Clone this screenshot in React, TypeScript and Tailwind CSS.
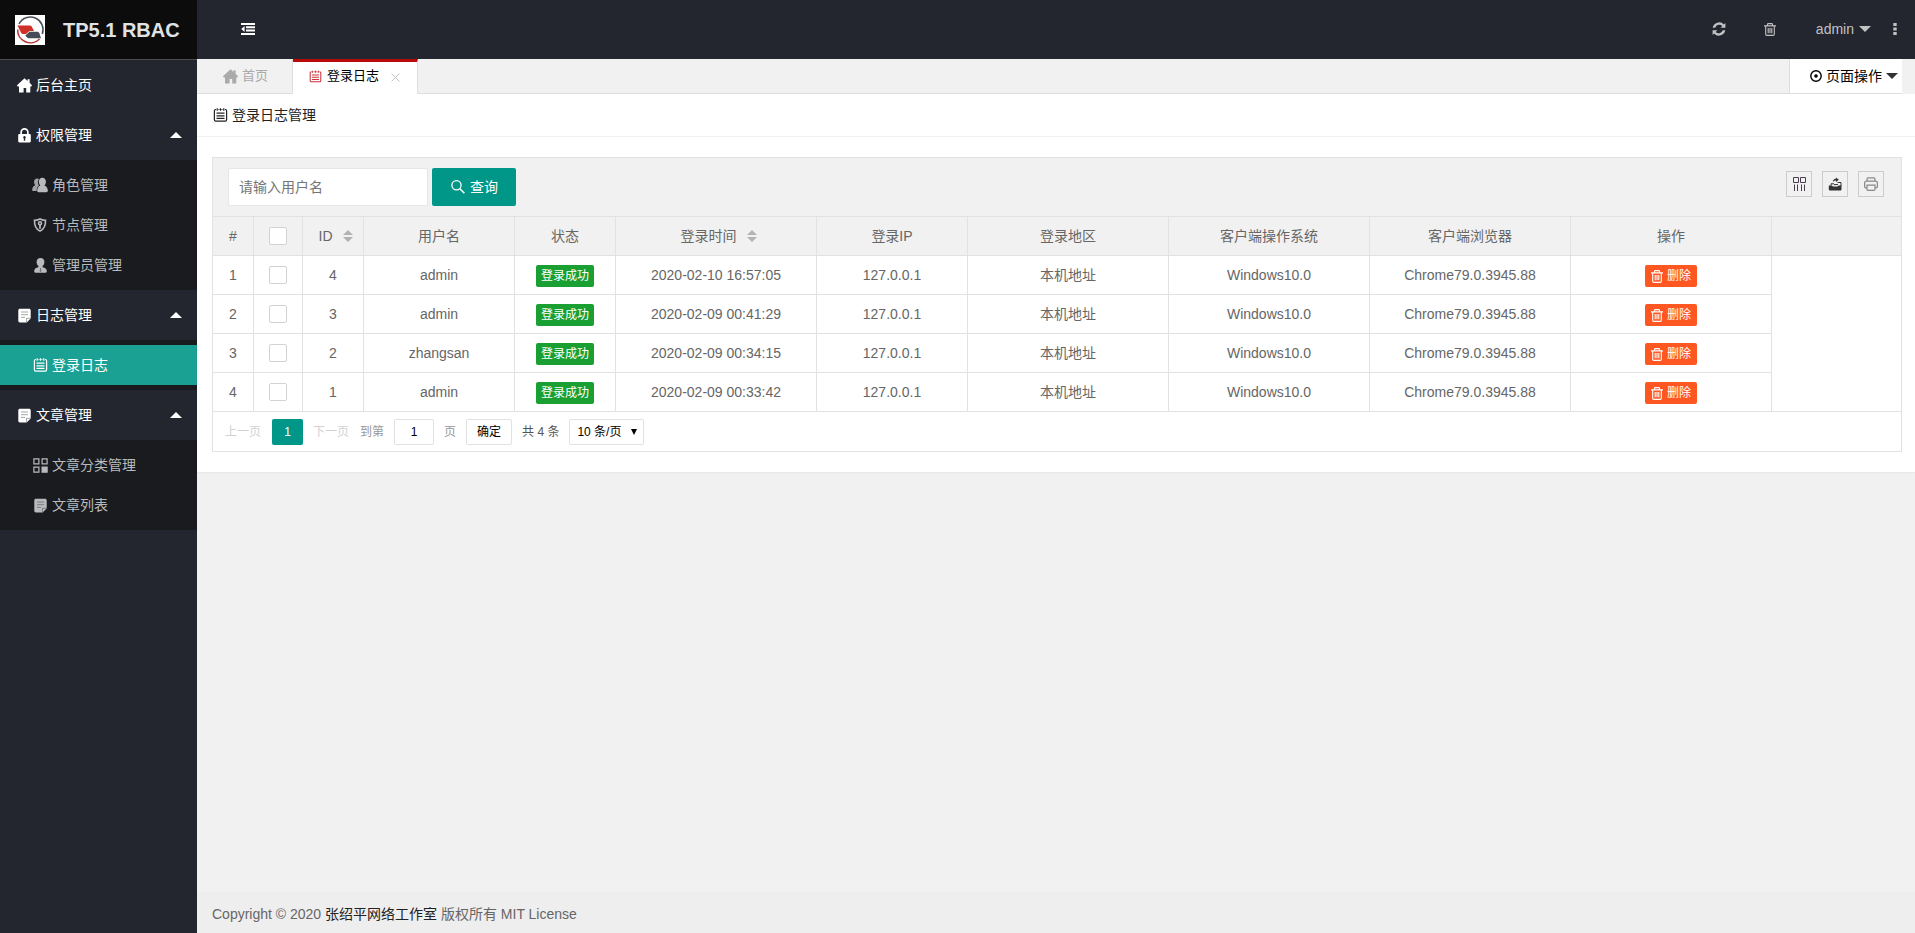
import type { ReactNode } from "react";

type IconProps = { className?: string };

const logs = [
  { id: 4, user: "admin", time: "2020-02-10 16:57:05", ip: "127.0.0.1" },
  { id: 3, user: "admin", time: "2020-02-09 00:41:29", ip: "127.0.0.1" },
  { id: 2, user: "zhangsan", time: "2020-02-09 00:34:15", ip: "127.0.0.1" },
  { id: 1, user: "admin", time: "2020-02-09 00:33:42", ip: "127.0.0.1" },
];

export default function App() {
  return (
    <div className="flex min-h-screen bg-[#f1f1f1] font-['Liberation_Sans','Noto_Sans_CJK_SC',sans-serif] text-sm text-[#666]">
      <Sidebar />
      <div className="flex min-w-0 flex-1 flex-col">
        <TopBar />
        <TabBar />
        <main className="flex-1">
          <section className="bg-white pb-5 shadow-xs">
            <h2 className="flex h-[43px] items-center gap-1 border-b border-[#f2f2f2] px-4 text-[#222]">
              <NotepadIcon className="h-[14px] w-[15px]" />
              登录日志管理
            </h2>
            <div className="ml-[15px] mr-[13px] mt-5 border border-[#e2e2e2]">
              <Toolbar />
              <LogTable />
              <Pagination />
            </div>
          </section>
        </main>
        <footer className="flex h-[41px] items-center bg-[#eee] px-[15px] pt-[2px]">
          <p>
            Copyright © 2020 <a href="#studio" className="text-[#222]">张绍平网络工作室</a> 版权所有 MIT License
          </p>
        </footer>
      </div>
    </div>
  );
}

/* Sidebar */

function Sidebar() {
  return (
    <aside className="w-[197px] shrink-0 bg-[#23262e]">
      <a href="#home" className="flex h-[60px] items-center gap-[18px] border-b border-[#4a4c50] bg-[#0c0c0c] pl-[15px]">
        <Logo className="size-[30px]" />
        <span className="text-xl font-bold text-[#e0e3e6]">TP5.1 RBAC</span>
      </a>
      <nav>
        <a href="#home" className="flex h-[50px] items-center gap-1 pl-[17px] text-white">
          <HomeIcon className="size-[15px]" />
          后台主页
        </a>
        <MenuGroup icon={<LockIcon className="size-[15px]" />} title="权限管理">
          <MenuItem icon={<UsersIcon className="h-4 w-[17px]" />} label="角色管理" />
          <MenuItem icon={<ShieldIcon className="size-[14px]" />} label="节点管理" />
          <MenuItem icon={<UserIcon className="size-[15px]" />} label="管理员管理" />
        </MenuGroup>
        <MenuGroup icon={<DocIcon className="size-[15px]" />} title="日志管理">
          <MenuItem icon={<NotepadIcon className="h-[14px] w-[15px]" />} label="登录日志" active />
        </MenuGroup>
        <MenuGroup icon={<DocIcon className="size-[15px]" />} title="文章管理">
          <MenuItem icon={<GridIcon className="size-[15px]" />} label="文章分类管理" />
          <MenuItem icon={<DocIcon className="size-[15px]" />} label="文章列表" />
        </MenuGroup>
      </nav>
    </aside>
  );
}

function MenuGroup({ icon, title, children }: { icon: ReactNode; title: string; children: ReactNode }) {
  return (
    <div>
      <button className="flex h-[50px] w-full items-center gap-1 pl-[17px] pr-[15px] text-white">
        {icon}
        {title}
        <Caret className="ml-auto h-[6px] w-3 rotate-180" />
      </button>
      <div className="bg-[#191b1f] py-[5px]">{children}</div>
    </div>
  );
}

function MenuItem({ icon, label, active }: { icon: ReactNode; label: string; active?: boolean }) {
  return (
    <a
      href="#menu"
      className={
        active
          ? "flex h-10 items-center gap-1 bg-[#1ba094] pl-8 text-white"
          : "flex h-10 items-center gap-1 pl-8 text-[#bababc]"
      }
    >
      <span className="flex w-4 justify-center">{icon}</span>
      {label}
    </a>
  );
}

/* Top bar and tabs */

function TopBar() {
  return (
    <header className="flex h-[59px] items-center bg-[#23262e] pb-px pl-11 pr-[18px] text-[#c2c2c4]">
      <button aria-label="Toggle menu" className="text-white">
        <FoldIcon className="h-3 w-[14px]" />
      </button>
      <div className="ml-auto flex items-center">
        <button aria-label="Refresh" className="mr-[38px]">
          <RefreshIcon className="size-[14px]" />
        </button>
        <button aria-label="Clear cache" className="mr-10">
          <TrashIcon className="h-[13px] w-3" />
        </button>
        <button className="mr-[22px] flex items-center gap-[5px]">
          admin
          <Caret className="h-[6px] w-3" />
        </button>
        <button aria-label="More">
          <DotsIcon className="h-3 w-1" />
        </button>
      </div>
    </header>
  );
}

function TabBar() {
  return (
    <div className="flex h-[35px] pr-[13px] text-[13px]">
      <a href="#home" className="flex items-center gap-1 border-b border-r border-[#dedede] pl-[26px] pr-6 text-[#aaa]">
        <HomeIcon className="size-[15px]" />
        首页
      </a>
      <div className="flex items-center border-r border-t-3 border-r-[#dedede] border-t-[#b80a0a] bg-white pb-[3px] pl-4 pr-[17px]">
        <a href="#logs" className="flex items-center gap-[5px] text-black">
          <NotepadIcon className="h-[13px] w-[13px] text-[#c9333a]" />
          登录日志
        </a>
        <button aria-label="Close tab" className="ml-3 pt-px text-[#c2c2c2]">
          <svg viewBox="0 0 9 9" className="size-[9px]" stroke="currentColor">
            <path d="M.5.5l8 8M8.500.5l-8 8" />
          </svg>
        </button>
      </div>
      <div className="flex-1 border-b border-[#dedede]" />
      <button className="flex items-center gap-1 border-b border-l border-[#dedede] bg-white pl-5 pr-1 text-sm text-black">
        <TargetIcon className="size-3" />
        页面操作
        <Caret className="h-[6px] w-3 text-[#333]" />
      </button>
    </div>
  );
}

/* Log list */

function Toolbar() {
  return (
    <form className="flex h-[59px] items-center border-b border-[#e2e2e2] bg-[#f1f1f1] pl-[15px] pr-[17px]">
      <input
        type="text"
        aria-label="用户名"
        placeholder="请输入用户名"
        className="h-[38px] w-[200px] rounded-xs border border-[#e6e6e6] bg-white px-[10px] placeholder:text-[#757575]"
      />
      <button type="button" className="ml-1 flex h-[38px] items-center gap-[5px] rounded-xs bg-[#009688] pl-[19px] pr-[18px] text-white">
        <SearchIcon className="size-[14px]" />
        查询
      </button>
      <div className="ml-auto flex gap-[10px] pb-[6px]">
        <ToolButton label="筛选列">
          <ColumnsIcon className="size-[14px] text-[#4a3f4e]" />
        </ToolButton>
        <ToolButton label="导出">
          <ExportIcon className="size-[14px] text-[#333]" />
        </ToolButton>
        <ToolButton label="打印">
          <PrintIcon className="size-[14px] text-[#888]" />
        </ToolButton>
      </div>
    </form>
  );
}

function ToolButton({ label, children }: { label: string; children: ReactNode }) {
  return (
    <button type="button" aria-label={label} className="flex size-[26px] items-center justify-center border border-[#ccc]">
      {children}
    </button>
  );
}

function LogTable() {
  return (
    <table className="w-full table-fixed border-separate border-spacing-0 text-center">
      <colgroup>
        <col className="w-[41px]" />
        <col className="w-[49px]" />
        <col className="w-[61px]" />
        <col className="w-[151px]" />
        <col className="w-[101px]" />
        <col className="w-[201px]" />
        <col className="w-[151px]" />
        <col className="w-[201px]" />
        <col className="w-[201px]" />
        <col className="w-[201px]" />
        <col className="w-[201px]" />
        <col />
      </colgroup>
      <thead>
        <tr className="bg-[#f1f1f1]">
          <Th>#</Th>
          <Th><Check label="全选" /></Th>
          <Th><SortLabel>ID</SortLabel></Th>
          <Th>用户名</Th>
          <Th>状态</Th>
          <Th><SortLabel>登录时间</SortLabel></Th>
          <Th>登录IP</Th>
          <Th>登录地区</Th>
          <Th>客户端操作系统</Th>
          <Th>客户端浏览器</Th>
          <Th>操作</Th>
          <td className="border-b border-[#e2e2e2]" />
        </tr>
      </thead>
      <tbody>
        {logs.map((log, i) => (
          <tr key={log.id}>
            <Td>{i + 1}</Td>
            <Td><Check label={`选择 ${log.id}`} /></Td>
            <Td>{log.id}</Td>
            <Td>{log.user}</Td>
            <Td>
              <span className="mx-auto mt-[2px] flex h-[22px] w-[58px] items-center justify-center rounded-xs bg-[#1a9f33] text-xs text-white">
                登录成功
              </span>
            </Td>
            <Td>{log.time}</Td>
            <Td>{log.ip}</Td>
            <Td>本机地址</Td>
            <Td>Windows10.0</Td>
            <Td>Chrome79.0.3945.88</Td>
            <Td>
              <button className="mx-auto mt-[2px] flex h-[22px] items-center gap-1 rounded-xs bg-[#ff5722] px-[6px] text-xs text-white">
                <TrashIcon className="h-[13px] w-3" />
                删除
              </button>
            </Td>
            {i === 0 && <td rowSpan={logs.length} className="border-b border-[#e2e2e2]" />}
          </tr>
        ))}
      </tbody>
    </table>
  );
}

function Th({ children }: { children: ReactNode }) {
  return <th className="h-[39px] border-b border-r border-[#e2e2e2] p-0 font-normal">{children}</th>;
}

function Td({ children }: { children: ReactNode }) {
  return <td className="h-[39px] border-b border-r border-[#e2e2e2] p-0">{children}</td>;
}

function SortLabel({ children }: { children: ReactNode }) {
  return (
    <span className="flex items-center justify-center gap-[10px] pl-[5px]">
      {children}
      <SortIcon className="h-3 w-[10px]" />
    </span>
  );
}

function Check({ label }: { label: string }) {
  return (
    <input
      type="checkbox"
      aria-label={label}
      className="mx-auto block size-[18px] appearance-none rounded-xs border border-[#d2d2d2] bg-white checked:bg-[#5fb878]"
    />
  );
}

function Pagination() {
  return (
    <div className="flex h-[39px] items-center pl-3 text-xs">
      <button disabled className="text-[#d2d2d2]">上一页</button>
      <button className="ml-[11px] h-[26px] w-[31px] rounded-xs bg-[#009688] text-white">1</button>
      <button disabled className="ml-[10px] text-[#d2d2d2]">下一页</button>
      <label htmlFor="page" className="ml-[11px] text-[#999]">到第</label>
      <input id="page" type="text" defaultValue="1" className="ml-[10px] h-[26px] w-10 rounded-xs border border-[#e2e2e2] text-center text-black" />
      <span className="ml-[10px] text-[#999]">页</span>
      <button className="ml-[10px] h-[26px] w-[46px] rounded-xs border border-[#e2e2e2] text-black">确定</button>
      <span className="ml-[10px] text-[#555]">共 4 条</span>
      <div className="relative ml-[10px]">
        <select aria-label="每页条数" className="h-[26px] w-[75px] appearance-none rounded-xs border border-[#e2e2e2] bg-white pl-[7px] text-black">
          <option>10 条/页</option>
          <option>20 条/页</option>
          <option>50 条/页</option>
        </select>
        <Caret className="pointer-events-none absolute right-[7px] top-[10px] h-[6px] w-[6px] text-black" />
      </div>
    </div>
  );
}

/* Icons */

function Logo({ className }: IconProps) {
  return (
    <svg viewBox="0 0 30 30" className={className} fill="none">
      <path fill="#fff" d="M0 0h30v30H0z" />
      <path d="M4 9A12.700 12.700 0 0 1 27.300 19" stroke="#4a4f58" strokeWidth="1.500" />
      <path d="M2.700 14.500A12.700 12.700 0 0 0 24.500 24" stroke="#b5322f" strokeWidth="1.500" />
      <path d="M2.500 10.500h12c1.200 0 2 .5 2.500 1.500l2 4h-4.500l-3.500 3H8.500c-1.200 0-2-.5-2.500-1.500z" fill="#cf3128" />
      <path d="M14.500 16.800h7.500c1.200 0 2 .5 2.400 1.500l1.600 5H14.500c-1.500 0-2.500-.8-4.200-2.800z" fill="#464c55" />
    </svg>
  );
}

function Caret({ className }: IconProps) {
  return (
    <svg viewBox="0 0 12 6" preserveAspectRatio="none" className={className} fill="currentColor">
      <path d="M0 0h12L6 6z" />
    </svg>
  );
}

function HomeIcon({ className }: IconProps) {
  return (
    <svg viewBox="0 0 15 15" className={className} fill="currentColor">
      <path d="M7.500.2l3 2.700V1.200h2.100v3.600L15 7.300l-.6 1.200h-1.100v6H9.200V10H6.600v4.500H2V8.500H.6L0 7.300z" />
    </svg>
  );
}

function LockIcon({ className }: IconProps) {
  return (
    <svg viewBox="0 0 15 15" className={className} fill="currentColor" fillRule="evenodd">
      <path d="M3.300 6V4.300a4.200 4.200 0 0 1 8.400 0V6h1.200c.5 0 .9.400.9.900v6.300c0 .7-.5 1.200-1.200 1.200H2.400c-.7 0-1.200-.5-1.200-1.200V6.900c0-.5.400-.9.900-.9zm1.700 0h5V4.300a2.500 2.500 0 0 0-5 0zm1.800 4.500v2.200h1.400v-2.200a1.300 1.300 0 1 0-1.400 0z" />
    </svg>
  );
}

function UsersIcon({ className }: IconProps) {
  return (
    <svg viewBox="0 0 17 16" className={className} fill="currentColor">
      <path opacity=".85" d="M5.500 1.200c-2 0-3.400 1.500-3.300 3.700 0 1.400.5 2.500 1.300 3.300C1.300 9.200.2 10.700.2 13.300c0 .8.400 1.200 1.200 1.200H5c-.1-3 .7-4.700 2.500-5.700C6 7 5.900 3.500 7.500 1.700 7 1.400 6.300 1.200 5.500 1.200z" />
      <path d="M11 .3c2.300 0 3.900 1.800 3.800 4.200 0 1.600-.6 3-1.600 3.900 2.300 1 3.600 2.700 3.600 5.500 0 1.200-.5 1.700-1.500 1.700H7c-1 0-1.500-.5-1.500-1.700 0-2.800 1.200-4.500 3.400-5.500-1-.9-1.600-2.300-1.600-3.900C7.200 2.100 8.700.3 11 .3z" />
    </svg>
  );
}

function UserIcon({ className }: IconProps) {
  return (
    <svg viewBox="0 0 15 15" className={className} fill="currentColor">
      <path d="M7.500 0c2.300 0 3.900 1.500 3.900 3.900 0 1.800-.8 3.200-1.800 4v1.400c2.600.4 4.200 1.600 4.200 4 0 .9-.4 1.400-1.200 1.400H2.400c-.8 0-1.200-.5-1.200-1.400 0-2.400 1.600-3.600 4.200-4V7.900c-1-.8-1.800-2.200-1.800-4C3.600 1.500 5.200 0 7.500 0z" />
      <path d="M6.900 10h1.200l-.2 1 .5 2.200-.9.900-.9-.9.500-2.200z" fill="#191b1f" opacity=".45" />
    </svg>
  );
}

function ShieldIcon({ className }: IconProps) {
  return (
    <svg viewBox="0 0 14 14" className={className} fill="none" stroke="currentColor" strokeWidth="1.600">
      <path d="M7 1c1.600.9 3.600 1.300 5.500 1.200.2 5-1.100 8.700-5.500 10.900C2.600 10.900 1.300 7.200 1.500 2.200 3.400 2.300 5.400 1.900 7 1z" />
      <circle cx="7" cy="5.300" r="1.500" strokeWidth="1.600" />
      <path d="M7 6.500v4.200" strokeWidth="1.800" />
    </svg>
  );
}

function DocIcon({ className }: IconProps) {
  return (
    <svg viewBox="0 0 15 15" className={className} fill="currentColor">
      <path d="M2.900.7h9.200c.9 0 1.600.7 1.600 1.600v8.200l-4 3.900H2.900c-.9 0-1.600-.7-1.600-1.600V2.300C1.300 1.400 2 .7 2.900.7z" />
      <path d="M4 4h7M4 6.700h7M4 9.400h4M9.500 14v-3.700h4" fill="none" stroke="#23262e" strokeOpacity=".45" strokeWidth=".9" />
    </svg>
  );
}

function NotepadIcon({ className }: IconProps) {
  return (
    <svg viewBox="0 0 15 14" className={className} fill="none" stroke="currentColor" strokeWidth="1.200">
      <path d="M3 1.500h-.3c-.8 0-1.300.5-1.300 1.300v9c0 .8.500 1.300 1.300 1.300h9.600c.8 0 1.300-.5 1.300-1.300v-9c0-.8-.5-1.300-1.300-1.300H12M5.500 1.500h1M8.500 1.500h1" />
      <path d="M4.200.3v2.500M7.500.3v2.500M10.800.3v2.500M3.500 5.200h8M3.500 7.800h8M3.500 10.400h8" />
    </svg>
  );
}

function GridIcon({ className }: IconProps) {
  return (
    <svg viewBox="0 0 15 15" className={className} fill="none" stroke="currentColor">
      <path d="M.9.900h5v5h-5zM9.100.900h5v5h-5zM.9 9.100h5v5h-5z" strokeWidth="1.200" />
      <path d="M9.100 9.100h5v5h-5z" fill="currentColor" strokeWidth="1.200" />
    </svg>
  );
}

function FoldIcon({ className }: IconProps) {
  return (
    <svg viewBox="0 0 14 12" className={className} fill="currentColor">
      <path d="M0 0h14v2H0zM5 3.300h9v2H5zM5 6.600h9v2H5zM0 10h14v2H0zM3.600 3v6L.3 6z" />
    </svg>
  );
}

function RefreshIcon({ className }: IconProps) {
  return (
    <svg viewBox="0 0 14 14" className={className} fill="currentColor">
      <path d="M13.400 1v4.800H8.600l1.700-1.700A4.200 4.200 0 0 0 3.200 5.700H.7A6.500 6.500 0 0 1 11.900 2.500z" />
      <path d="M.6 13V8.200h4.800L3.700 9.900A4.200 4.200 0 0 0 10.800 8.300h2.500A6.500 6.500 0 0 1 2.100 11.500z" />
    </svg>
  );
}

function TrashIcon({ className }: IconProps) {
  return (
    <svg viewBox="0 0 12 13" className={className} fill="none" stroke="currentColor" strokeWidth="1.100">
      <path d="M0 2.900h12M3.500 2.800V1.400c0-.5.300-.8.900-.8h3.200c.6 0 .9.300.9.800v1.400M1.700 3v8.300c0 .7.400 1.100 1.100 1.100h6.400c.7 0 1.100-.4 1.100-1.100V3M4.200 5v5.300M6 5v5.300M7.800 5v5.300" />
    </svg>
  );
}

function DotsIcon({ className }: IconProps) {
  return (
    <svg viewBox="0 0 4 12" className={className} fill="currentColor">
      <path d="M.3 0h3.400v3H.3zM.3 4.500h3.400v3H.3zM.3 9h3.400v3H.3z" />
    </svg>
  );
}

function TargetIcon({ className }: IconProps) {
  return (
    <svg viewBox="0 0 12 12" className={className}>
      <circle cx="6" cy="6" r="5.200" fill="none" stroke="currentColor" strokeWidth="1.400" />
      <circle cx="6" cy="6" r="1.800" fill="currentColor" />
    </svg>
  );
}

function SearchIcon({ className }: IconProps) {
  return (
    <svg viewBox="0 0 14 14" className={className} fill="none" stroke="currentColor" strokeWidth="1.300">
      <circle cx="5.500" cy="5.300" r="4.600" />
      <path d="M8.900 8.700l4.500 4.500" strokeWidth="1.600" />
    </svg>
  );
}

function SortIcon({ className }: IconProps) {
  return (
    <svg viewBox="0 0 10 12" className={className} fill="#b2b2b2">
      <path d="M0 5l5-5 5 5zM0 7h10l-5 5z" />
    </svg>
  );
}

function ColumnsIcon({ className }: IconProps) {
  return (
    <svg viewBox="0 0 14 14" className={className} fill="none" stroke="currentColor">
      <path d="M1.500.5h5v5h-5zM8.500.5h5v5h-5zM2.500 7.500V14M5.500 7.500V14M9.500 7.500V14M12.500 7.500V14" />
    </svg>
  );
}

function ExportIcon({ className }: IconProps) {
  return (
    <svg viewBox="0 0 14 14" className={className} fill="currentColor">
      <path d="M.8 8.500h3.200c.4.800 1 1.100 1.800 1.100h3c.8 0 1.400-.3 1.800-1.100h2.900v3.700c0 .8-.5 1.300-1.300 1.300h-10c-.8 0-1.400-.5-1.400-1.300z" />
      <path d="M7.900.5l3 2.200-3 2.200V3.500C6.400 3.500 5.400 4 4.800 5.300 4.800 3.200 5.900 1.800 7.900 1.700z" />
      <path d="M3 8.500V6.800h3M9.500 5.500H13v3.500M6 7.600h4" fill="none" stroke="currentColor" />
    </svg>
  );
}

function PrintIcon({ className }: IconProps) {
  return (
    <svg viewBox="0 0 14 14" className={className} fill="none" stroke="currentColor" strokeWidth="1.200">
      <path d="M3 4.200V2C3 1.200 3.400.8 4.200.8h5.600c.8 0 1.200.4 1.200 1.200v2.200M3 10.800H2C1.100 10.800.6 10.300.6 9.400V6.200c0-1.200.7-2 1.900-2h9c1.200 0 1.900.8 1.900 2v3.200c0 .9-.5 1.400-1.400 1.400h-1M3 8.200h8v4c0 .7-.4 1.100-1.100 1.100H4.100c-.7 0-1.100-.4-1.100-1.100z" />
    </svg>
  );
}
